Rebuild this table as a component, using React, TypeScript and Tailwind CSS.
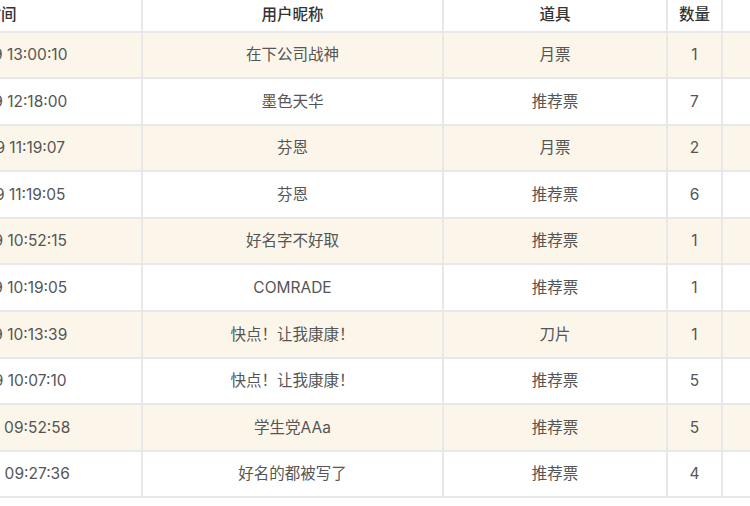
import React from "react";

type Row = { time: string; name: string; item: string; count: number };

const rows: Row[] = [
  { time: "19-03-29 13:00:10", name: "在下公司战神", item: "月票", count: 1 },
  { time: "19-03-29 12:18:00", name: "墨色天华", item: "推荐票", count: 7 },
  { time: "19-03-29 11:19:07", name: "芬恩", item: "月票", count: 2 },
  { time: "19-03-29 11:19:05", name: "芬恩", item: "推荐票", count: 6 },
  { time: "19-03-29 10:52:15", name: "好名字不好取", item: "推荐票", count: 1 },
  { time: "19-03-29 10:19:05", name: "COMRADE", item: "推荐票", count: 1 },
  { time: "19-03-29 10:13:39", name: "快点！让我康康！", item: "刀片", count: 1 },
  { time: "19-03-29 10:07:10", name: "快点！让我康康！", item: "推荐票", count: 5 },
  { time: "19-03-29 09:52:58", name: "学生党AAa", item: "推荐票", count: 5 },
  { time: "19-03-29 09:27:36", name: "好名的都被写了", item: "推荐票", count: 4 },
];

const grid = "grid grid-cols-[282px_301px_224px_55px_127px]";
const cell = "flex items-center justify-center border-r-2 border-[#e8e8e8] whitespace-nowrap";

export default function App() {
  return (
    <div className="w-[750px] h-[506px] overflow-hidden bg-white font-[Inter,'Noto_Sans_CJK_SC',sans-serif] text-[15.5px]">
      <div className="-ml-[139px] w-[989px]">
        <div className={`${grid} h-[32.5px] border-b-2 border-[#e8e8e8] text-[#333] font-medium`}>
          <div className={`${cell} pb-[2px]`}>时间</div>
          <div className={`${cell} pb-[2px]`}>用户昵称</div>
          <div className={`${cell} pb-[2px]`}>道具</div>
          <div className={`${cell} pb-[2px]`}>数量</div>
          <div className={`${cell} pb-[2px]`}></div>
        </div>
        {rows.map((r, i) => (
          <div
            key={i}
            className={`${grid} h-[46.58px] border-b-2 border-[#e8e8e8] text-[#555] ${
              i % 2 === 0 ? "bg-[#fcf6ea]" : "bg-white"
            }`}
          >
            <div className={cell}>{r.time}</div>
            <div className={cell}>{r.name}</div>
            <div className={cell}>{r.item}</div>
            <div className={cell}>{r.count}</div>
            <div className={cell}></div>
          </div>
        ))}
      </div>
    </div>
  );
}
